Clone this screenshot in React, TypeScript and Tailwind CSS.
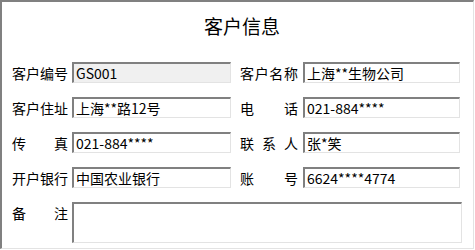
const font = { fontFamily: '"Noto Sans CJK SC", "Noto Sans", sans-serif' }

function Label({ text, className = "" }: { text: string; className?: string }) {
  // chars spread across the fixed width, like a justified Win form label
  return (
    <div className={`flex h-[21px] items-center justify-between text-[14px] leading-none text-black ${className}`}>
      {text.split("").map((ch, i) => (
        <span key={i}>{ch}</span>
      ))}
    </div>
  )
}

function Field({ value, className = "", gray = false }: { value: string; className?: string; gray?: boolean }) {
  return (
    <div
      className={`flex h-[21px] items-center border-t-2 border-l-2 border-r border-b border-t-[#808080] border-l-[#808080] border-r-[#e3e3e3] border-b-[#e3e3e3] pl-[2px] text-[14px] leading-none text-black ${
        gray ? "bg-[#f0f0f0]" : "bg-white"
      } ${className}`}
    >
      {value}
    </div>
  )
}

const rows = [
  { l: "客户编号", lv: "GS001", r: "客户名称", rv: "上海**生物公司", gray: true },
  { l: "客户住址", lv: "上海**路12号", r: "电话", rv: "021-884****" },
  { l: "传真", lv: "021-884****", r: "联系人", rv: "张*笑" },
  { l: "开户银行", lv: "中国农业银行", r: "账号", rv: "6624****4774" },
]

export default function App() {
  return (
    <div className="h-[250px] w-[475px] bg-white" style={font}>
      <div className="h-[249px] w-[474px] border-t-2 border-l-2 border-r border-b border-t-[#808080] border-l-[#808080] border-r-[#e3e3e3] border-b-[#e3e3e3]">
        <div className="flex h-[60px] items-start justify-center pl-[9px] pt-[14px] text-[19px] leading-none text-black">
          客户信息
        </div>

        <div className="flex flex-col gap-[14px] pl-[10px]">
          {rows.map((row) => (
            <div key={row.l} className="flex items-center">
              <Label text={row.l} className="w-[56px]" />
              <Field value={row.lv} gray={row.gray} className="ml-[4px] w-[159px]" />
              <Label text={row.r} className="ml-[9px] w-[58px]" />
              <Field value={row.rv} className="ml-[5px] w-[157px]" />
            </div>
          ))}

          <div className="flex items-start">
            <Label text="备注" className="w-[56px]" />
            <div className="ml-[4px] h-[41px] w-[390px] border-t-2 border-l-2 border-r border-b border-t-[#808080] border-l-[#808080] border-r-[#e3e3e3] border-b-[#e3e3e3] bg-white" />
          </div>
        </div>
      </div>
    </div>
  )
}
